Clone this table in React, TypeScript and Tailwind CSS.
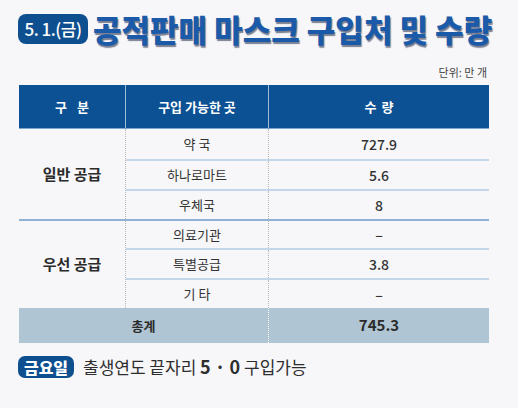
import React from 'react';

const font = { fontFamily: '"Noto Sans CJK KR", "Noto Sans", sans-serif' };

const groups = [
  {
    name: '일반 공급',
    rows: [
      { place: '약 국', qty: '727.9', h: 'h-[30px]' },
      { place: '하나로마트', qty: '5.6', h: 'h-[30px]' },
      { place: '우체국', qty: '8', h: 'h-[30px]' },
    ],
  },
  {
    name: '우선 공급',
    rows: [
      { place: '의료기관', qty: '–', h: 'h-[27px]' },
      { place: '특별공급', qty: '3.8', h: 'h-[30px]' },
      { place: '기 타', qty: '–', h: 'h-[30px]' },
    ],
  },
];

const App: React.FC = () => {
  return (
    <div className="w-[518px] h-[408px] bg-[#f7f7f9] overflow-hidden" style={font}>
      {/* Title */}
      <div className="flex items-center pt-[13px] pl-[18px]">
        <div className="w-[70px] h-[30px] rounded-[8px] bg-[#0e4f8f] text-white text-[17px] font-medium flex items-center justify-center tracking-[-0.5px]">
          5. 1.(금)
        </div>
        <h1
          className="ml-[5px] text-[31px] leading-[31px] font-black text-[#1b5aa8] whitespace-nowrap"
          style={{ textShadow: '1px 2px 1px rgba(20,30,60,0.55)' }}
        >
          공적판매 마스크 구입처 및 수량
        </h1>
      </div>

      {/* Unit */}
      <div className="text-right pr-[31px] mt-[22px] text-[11px] leading-[13px] text-[#444]">단위: 만 개</div>

      {/* Table */}
      <div className="mx-[19px] mt-[6px] w-[470px]">
        <div className="flex h-[44px] bg-[#0b5193] text-white text-[13px] font-bold border-b border-[#7fa6cc]">
          <div className="w-[106px] flex items-center justify-center gap-[10px]">
            <span>구</span>
            <span>분</span>
          </div>
          <div className="w-[143px] flex items-center justify-center border-l border-[#9fbcd9]">구입 가능한 곳</div>
          <div className="flex-1 flex items-center justify-center gap-[5px] border-l border-[#9fbcd9]">
            <span>수</span>
            <span>량</span>
          </div>
        </div>

        {groups.map((g, gi) => (
          <div key={g.name} className={gi > 0 ? 'flex border-t-2 border-[#8fb2d5]' : 'flex'}>
            <div className="w-[106px] flex items-center justify-center text-[15px] font-bold text-[#2b2b2b]">
              {g.name}
            </div>
            <div className="flex-1 flex flex-col border-l border-dotted border-[#b9b9b9]">
              {g.rows.map((r, ri) => (
                <div
                  key={r.place}
                  className={
                    ri > 0
                      ? `flex ${r.h} border-t-2 border-[#c3d6ea] text-[13px] text-[#333]`
                      : `flex ${r.h} text-[13px] text-[#333]`
                  }
                >
                  <div className="w-[142px] flex items-center justify-center">{r.place}</div>
                  <div className="flex-1 flex items-center justify-center border-l border-dotted border-[#b9b9b9] text-[14px] font-medium">
                    {r.qty}
                  </div>
                </div>
              ))}
            </div>
          </div>
        ))}

        <div className="flex h-[35px] bg-[#b0c5d3] text-[#2b2b2b] font-bold">
          <div className="w-[249px] flex items-center justify-center text-[13px]">총계</div>
          <div className="flex-1 flex items-center justify-center border-l border-dotted border-white text-[15px]">745.3</div>
        </div>
      </div>

      {/* Footer note */}
      <div className="flex items-center pl-[18px] mt-[10px]">
        <div className="w-[56px] h-[22px] rounded-[7px] bg-[#0e4f8f] text-white text-[16px] font-black flex items-center justify-center">
          금요일
        </div>
        <div className="ml-[9px] text-[17px] text-[#2e2e2e]">
          출생연도 끝자리 <span className="font-bold text-[18px]">5 · 0</span> 구입가능
        </div>
      </div>
    </div>
  );
};

export default App;
